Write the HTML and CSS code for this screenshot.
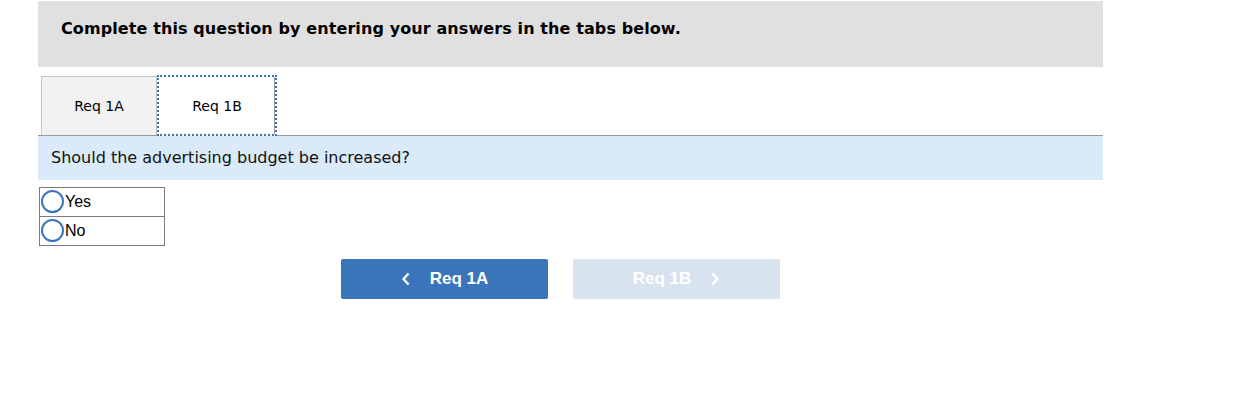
FILE: index.html
```html
<!DOCTYPE html>
<html>
<head>
<meta charset="utf-8">
<link rel="stylesheet" href="styles.css">
</head>
<body>
<div class="wrap">
  <div class="header"><span class="title">Complete this question by entering your answers in the tabs below.</span></div>
  <div class="tabs">
    <div class="tab tab-inactive">Req 1A</div>
    <div class="tab tab-active"><span>Req 1B</span></div>
  </div>
  <div class="question">Should the advertising budget be increased?</div>
  <table class="choices">
    <tr><td><span class="radio"></span>Yes</td></tr>
    <tr><td><span class="radio"></span>No</td></tr>
  </table>
  <div class="nav">
    <button class="btn btn-prev"><svg width="10" height="14" viewBox="0 0 10 14"><path d="M7.5 1.5 L2.5 7 L7.5 12.5" fill="none" stroke="#fff" stroke-width="2.4"/></svg><span>Req 1A</span></button>
    <button class="btn btn-next"><span>Req 1B</span><svg width="10" height="14" viewBox="0 0 10 14"><path d="M2.5 1.5 L7.5 7 L2.5 12.5" fill="none" stroke="#fff" stroke-width="2.4"/></svg></button>
  </div>
</div>
</body>
</html>
```
FILE: styles.css
```css
html, body { margin: 0; padding: 0; background: #fff; }
body { font-family: Verdana, "DejaVu Sans", sans-serif; color: #000; }
.wrap { margin-left: 38px; width: 1065px; padding-top: 1px; }
.header { background: #e0e0e0; height: 66px; box-sizing: border-box; padding: 18px 0 0 23px; }
.title { font-weight: bold; font-size: 16px; letter-spacing: 0.1px; }
.tabs { display: flex; align-items: flex-end; height: 69px; border-bottom: 1px solid #999; padding-left: 3px; box-sizing: border-box; }
.tab { font-size: 14px; height: 59px; box-sizing: border-box; display: flex; align-items: center; justify-content: center; }
.tab-inactive { width: 116px; background: #f2f2f2; border: 1px solid #c4c4c4; border-bottom: none; }
.tab-active { width: 120px; height: 61px; background: #fff; border: 2px dotted #3a75ba; margin-bottom: -1px; position: relative; }
.tab-active::after { content: ""; position: absolute; right: 0; top: 0; bottom: 0; border-right: 1px solid #999; }
.question { background: #daeaf8; height: 44px; box-sizing: border-box; padding: 12px 0 0 13px; font-size: 16px; color: #111; }
.choices { border-collapse: collapse; margin-top: 7px; margin-left: 1px; width: 126px; font-family: "Liberation Sans", Arial, sans-serif; font-size: 16px; }
.choices td { border: 1px solid #7a7a7a; height: 29px; padding: 0 0 0 1px; box-sizing: border-box; line-height: 28px; }
.radio { display: inline-block; width: 19px; height: 19px; border: 2px solid #3a75ba; border-radius: 50%; vertical-align: middle; margin-right: 1px; position: relative; top: -1px; }
.nav { display: flex; gap: 25px; margin-top: 13px; margin-left: 303px; }
.btn { width: 207px; height: 40px; border: none; border-radius: 2px; font-family: "Liberation Sans", Arial, sans-serif; font-weight: bold; font-size: 17px; color: #fff; display: flex; align-items: center; justify-content: center; gap: 19px; padding: 0; }
.btn-prev { background: #3a75ba; }
.btn-next { background: #d8e3f0; }
.btn svg { display: block; }
```
